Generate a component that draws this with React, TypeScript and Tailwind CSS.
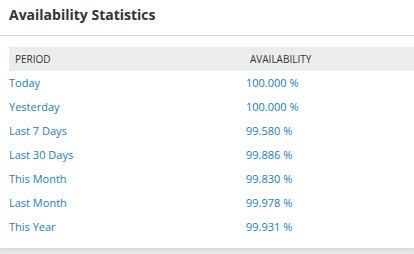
import React from 'react';

const rows = [
  { period: 'Today', value: '100.000 %' },
  { period: 'Yesterday', value: '100.000 %' },
  { period: 'Last 7 Days', value: '99.580 %' },
  { period: 'Last 30 Days', value: '99.886 %' },
  { period: 'This Month', value: '99.830 %' },
  { period: 'Last Month', value: '99.978 %' },
  { period: 'This Year', value: '99.931 %' },
];

export default function App() {
  return (
    <div className="w-[414px] h-[254px] bg-[#e9e9e9] overflow-hidden" style={{ fontFamily: '"Open Sans", "Liberation Sans", sans-serif' }}>
      <div className="bg-white h-[248px] shadow-[0_1px_4px_rgba(0,0,0,0.12)]">
        <div className="h-[36px] border-b border-[#d6d6d6] flex items-center px-[9px]">
          <h2 className="text-[14px] font-bold text-[#333333] leading-none mt-[-6px]">Availability Statistics</h2>
        </div>
        <div className="pl-[9px] pt-[11px]">
          <div className="grid grid-cols-[235px_1fr] h-[24px] items-center bg-[#ebecee] text-[10px] text-[#333333] uppercase">
            <div className="pl-[6px]">Period</div>
            <div className="pl-[6px]">Availability</div>
          </div>
          {rows.map(r => (
            <div key={r.period} className="grid grid-cols-[237px_1fr] h-[24px] items-center text-[11px] text-[#1b7cbd]">
              <div>{r.period}</div>
              <div>{r.value}</div>
            </div>
          ))}
        </div>
      </div>
    </div>
  );
}
